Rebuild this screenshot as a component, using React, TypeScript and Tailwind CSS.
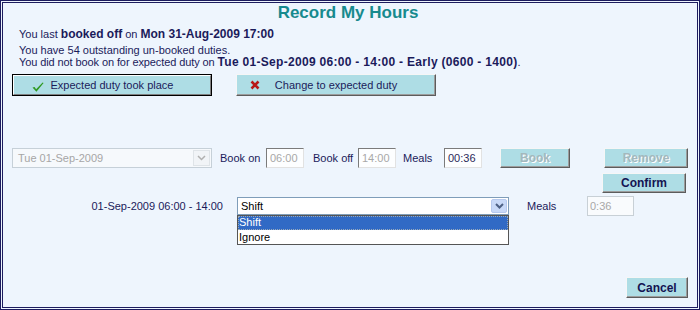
import React from 'react'

const raised =
  'border border-t-[#f6f6f6] border-l-[#f6f6f6] border-r-[#5c5c5c] border-b-[#5c5c5c] shadow-[inset_-1px_-1px_0_#9c9c9c] bg-[#aedde5]'

const sunken =
  'h-[20px] w-[38px] border border-t-[#7b7b7b] border-l-[#7b7b7b] border-r-[#e2e2e2] border-b-[#e2e2e2] bg-[#fdfeff] pl-[3px] leading-[18px]'

function Chevron({ color, width }: { color: string; width: number }) {
  return (
    <svg width="9" height="6" viewBox="0 0 9 6">
      <polyline points="1,1 4.5,4.5 8,1" fill="none" stroke={color} strokeWidth={width} />
    </svg>
  )
}

export default function App() {
  return (
    <div className="w-[700px] h-[310px] border-[3px] border-double border-[#1c1c5e] bg-[#eef5fd] font-['Liberation_Sans',Arial,sans-serif] text-[11px] text-[#1b1b5b] flex flex-col">
      <h1 className="text-center text-[17px] leading-[20px] font-bold text-[#178a8e] pr-[4px]">Record My Hours</h1>

      <div className="pl-[16px]">
        <p className="mt-[4px] leading-[14px]">
          You last <b className="text-[12px]">booked off</b> on <b className="text-[12px]">Mon 31-Aug-2009 17:00</b>
        </p>
        <p className="mt-[3px] leading-[12px]">You have 54 outstanding un-booked duties.</p>
        <p className="leading-[12px]">
          <span className="tracking-[-0.1px]">You did not book on for expected duty on </span>
          <b className="text-[12px] tracking-[0.3px]">Tue 01-Sep-2009 06:00 - 14:00 - Early (0600 - 1400)</b>.
        </p>
      </div>

      <div className="mt-[6px] ml-[9px] flex gap-[24px]">
        <button className="relative w-[200px] h-[22px] border border-black bg-[#aedde5]">
          <span className="absolute inset-0 border border-t-white border-l-white border-r-[#808080] border-b-[#808080]" />
          <svg className="absolute left-[19px] top-[7px]" width="12" height="10" viewBox="0 0 12 10">
            <path d="M0.5 5.6 L2.6 4.9 L4.1 7.2 L10.6 0.4 L11.6 1.1 L4.4 9.8 Z" fill="#2f9a22" />
          </svg>
          <span className="relative">Expected duty took place</span>
        </button>
        <button className={`relative w-[200px] h-[22px] ${raised}`}>
          <svg className="absolute left-[13px] top-[5px]" width="10" height="10" viewBox="0 0 10 10">
            <path d="M1.5 1.5 L8.5 8.5 M8.5 1.5 L1.5 8.5" stroke="#b81818" strokeWidth="2.6" />
          </svg>
          <span>Change to expected duty</span>
        </button>
      </div>

      <div className="mt-[52px] flex items-center h-[20px]">
        <div className="ml-[9px] w-[200px] h-[20px] flex border border-[#c6d0d8] bg-[#f6f9fc]">
          <span className="flex-1 pl-[5px] leading-[18px] text-[#a6a6a6]">Tue 01-Sep-2009</span>
          <span className="w-[17px] my-[1px] mr-[1px] border border-[#dfe4e8] bg-[#f1f4f7] flex items-center justify-center">
            <Chevron color="#b0b0b0" width={1.5} />
          </span>
        </div>
        <span className="ml-[8px] w-[46px]">Book on</span>
        <div className={`${sunken} text-[#a8a8a8]`}>06:00</div>
        <span className="ml-[9px] w-[45px]">Book off</span>
        <div className={`${sunken} text-[#a8a8a8]`}>14:00</div>
        <span className="ml-[7px] w-[41px]">Meals</span>
        <div className={`${sunken} text-[#2a2a5a]`}>00:36</div>
        <button className={`ml-[18px] w-[70px] h-[20px] ${raised} text-[12px] font-bold text-[#a3b8bd] [text-shadow:1px_1px_0_#ffffff]`}>
          Book
        </button>
        <button className={`ml-[34px] w-[84px] h-[20px] ${raised} text-[12px] font-bold text-[#a3b8bd] [text-shadow:1px_1px_0_#ffffff]`}>
          Remove
        </button>
      </div>

      <div className="mt-[5px] flex">
        <button className={`ml-[599px] w-[84px] h-[20px] ${raised} text-[12px] font-bold text-[#141452]`}>Confirm</button>
      </div>

      <div className="mt-[3px] flex items-center h-[20px]">
        <span className="w-[220px] text-right">01-Sep-2009 06:00 - 14:00</span>
        <div className="relative ml-[14px] w-[272px] h-[18px] flex border border-[#7f9db9] bg-white">
          <span className="flex-1 pl-[3px] leading-[16px] text-black">Shift</span>
          <span className="w-[16px] m-[1px] rounded-[2px] border border-[#b6c9ee] bg-[#c8d9f8] flex items-center justify-center">
            <Chevron color="#4d6185" width={2} />
          </span>
          <div className="absolute left-[-1px] right-[-1px] top-[17px] border border-[#555555] bg-white text-black">
            <div className="h-[14px] leading-[13px] pl-[1px] bg-[#316ac5] text-white outline-1 outline-dotted outline-[#9ab] -outline-offset-1">
              Shift
            </div>
            <div className="h-[14px] leading-[14px] pl-[1px]">Ignore</div>
          </div>
        </div>
        <span className="ml-[18px] w-[60px]">Meals</span>
        <div className="w-[47px] h-[20px] border border-[#c8d0d6] bg-[#f9fbfd] pl-[2px] leading-[18px] text-[#a8a8a8]">0:36</div>
      </div>

      <button className={`mt-auto mb-[9px] mr-[9px] self-end w-[62px] h-[21px] ${raised} text-[12px] font-bold text-[#141452]`}>
        Cancel
      </button>
    </div>
  )
}
